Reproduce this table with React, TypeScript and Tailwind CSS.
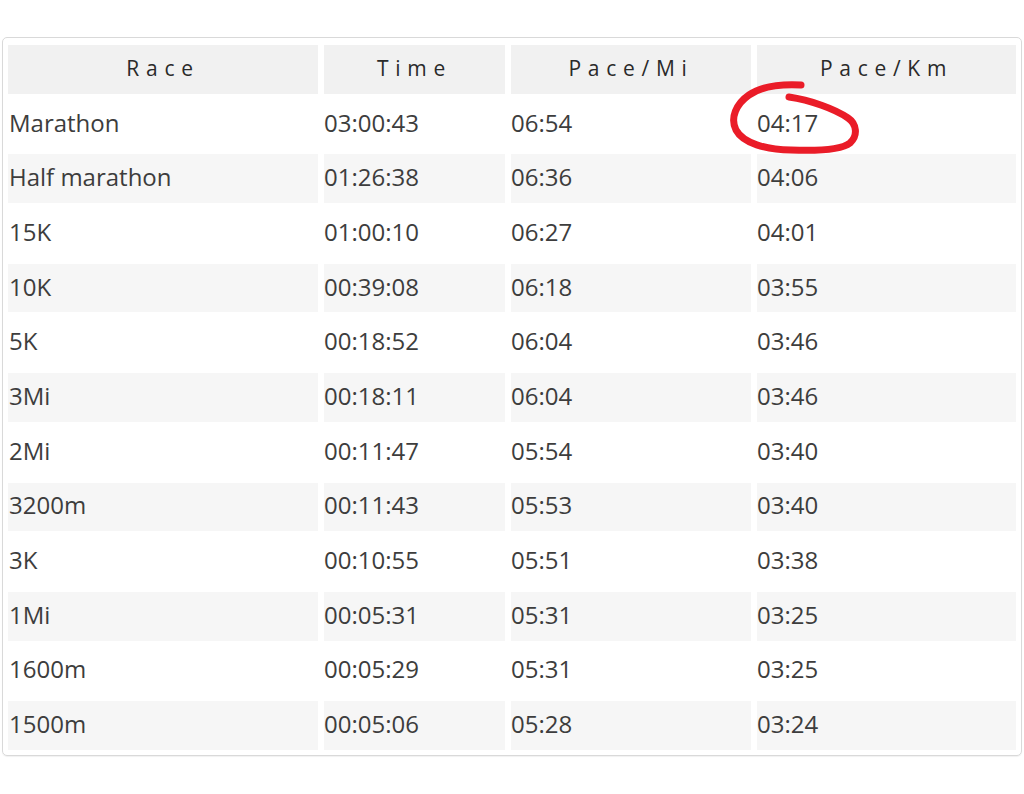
import React from "react";

const rows: [string, string, string, string][] = [
  ["Marathon", "03:00:43", "06:54", "04:17"],
  ["Half marathon", "01:26:38", "06:36", "04:06"],
  ["15K", "01:00:10", "06:27", "04:01"],
  ["10K", "00:39:08", "06:18", "03:55"],
  ["5K", "00:18:52", "06:04", "03:46"],
  ["3Mi", "00:18:11", "06:04", "03:46"],
  ["2Mi", "00:11:47", "05:54", "03:40"],
  ["3200m", "00:11:43", "05:53", "03:40"],
  ["3K", "00:10:55", "05:51", "03:38"],
  ["1Mi", "00:05:31", "05:31", "03:25"],
  ["1600m", "00:05:29", "05:31", "03:25"],
  ["1500m", "00:05:06", "05:28", "03:24"],
];

const headers = ["Race", "Time", "Pace/Mi", "Pace/Km"];

export default function App() {
  return (
    <div
      className="relative w-[1024px] h-[794px] bg-white pt-[37px] pl-[2px]"
      style={{ fontFamily: '"Open Sans", "Noto Sans", sans-serif' }}
    >
      <div className="w-[1020px] border border-[#d9d9d9] rounded-[5px] shadow-[0_1px_1px_rgba(0,0,0,0.06)] px-[5px] pt-[7px] pb-[5px]">
        <div className="grid grid-cols-[310px_181px_240px_259px] gap-x-[6px] gap-y-[6px] auto-rows-[48.7px]">
          {headers.map((h) => (
            <div
              key={h}
              className="bg-[#f1f1f1] flex items-center justify-center text-[21px] tracking-[0.32em] text-[#2a2a2a] pb-[1px]"
            >
              {h}
            </div>
          ))}
          {rows.map((r, i) =>
            r.map((c, j) => (
              <div
                key={`${i}-${j}`}
                className={`${i % 2 === 1 ? "bg-[#f6f6f6]" : "bg-white"} flex items-center text-[24px] text-[#3d3d3d] pb-[3px] ${j === 0 ? "pl-[1px]" : "pl-0"}`}
              >
                {c}
              </div>
            ))
          )}
        </div>
      </div>
      <svg
        className="absolute left-0 top-0 pointer-events-none"
        width="1024"
        height="794"
        viewBox="0 0 1024 794"
      >
        <path
          d="M801,85 C782,84 762,86 749,95 C736,104 730,118 736,130 C743,143 766,150 791,150 C816,151 841,150 850,143 C858,136 857,124 848,118 C835,109 810,100 789,97"
          fill="none"
          stroke="#ea1c28"
          strokeWidth="7"
          strokeLinecap="round"
          strokeLinejoin="round"
        />
      </svg>
    </div>
  );
}
